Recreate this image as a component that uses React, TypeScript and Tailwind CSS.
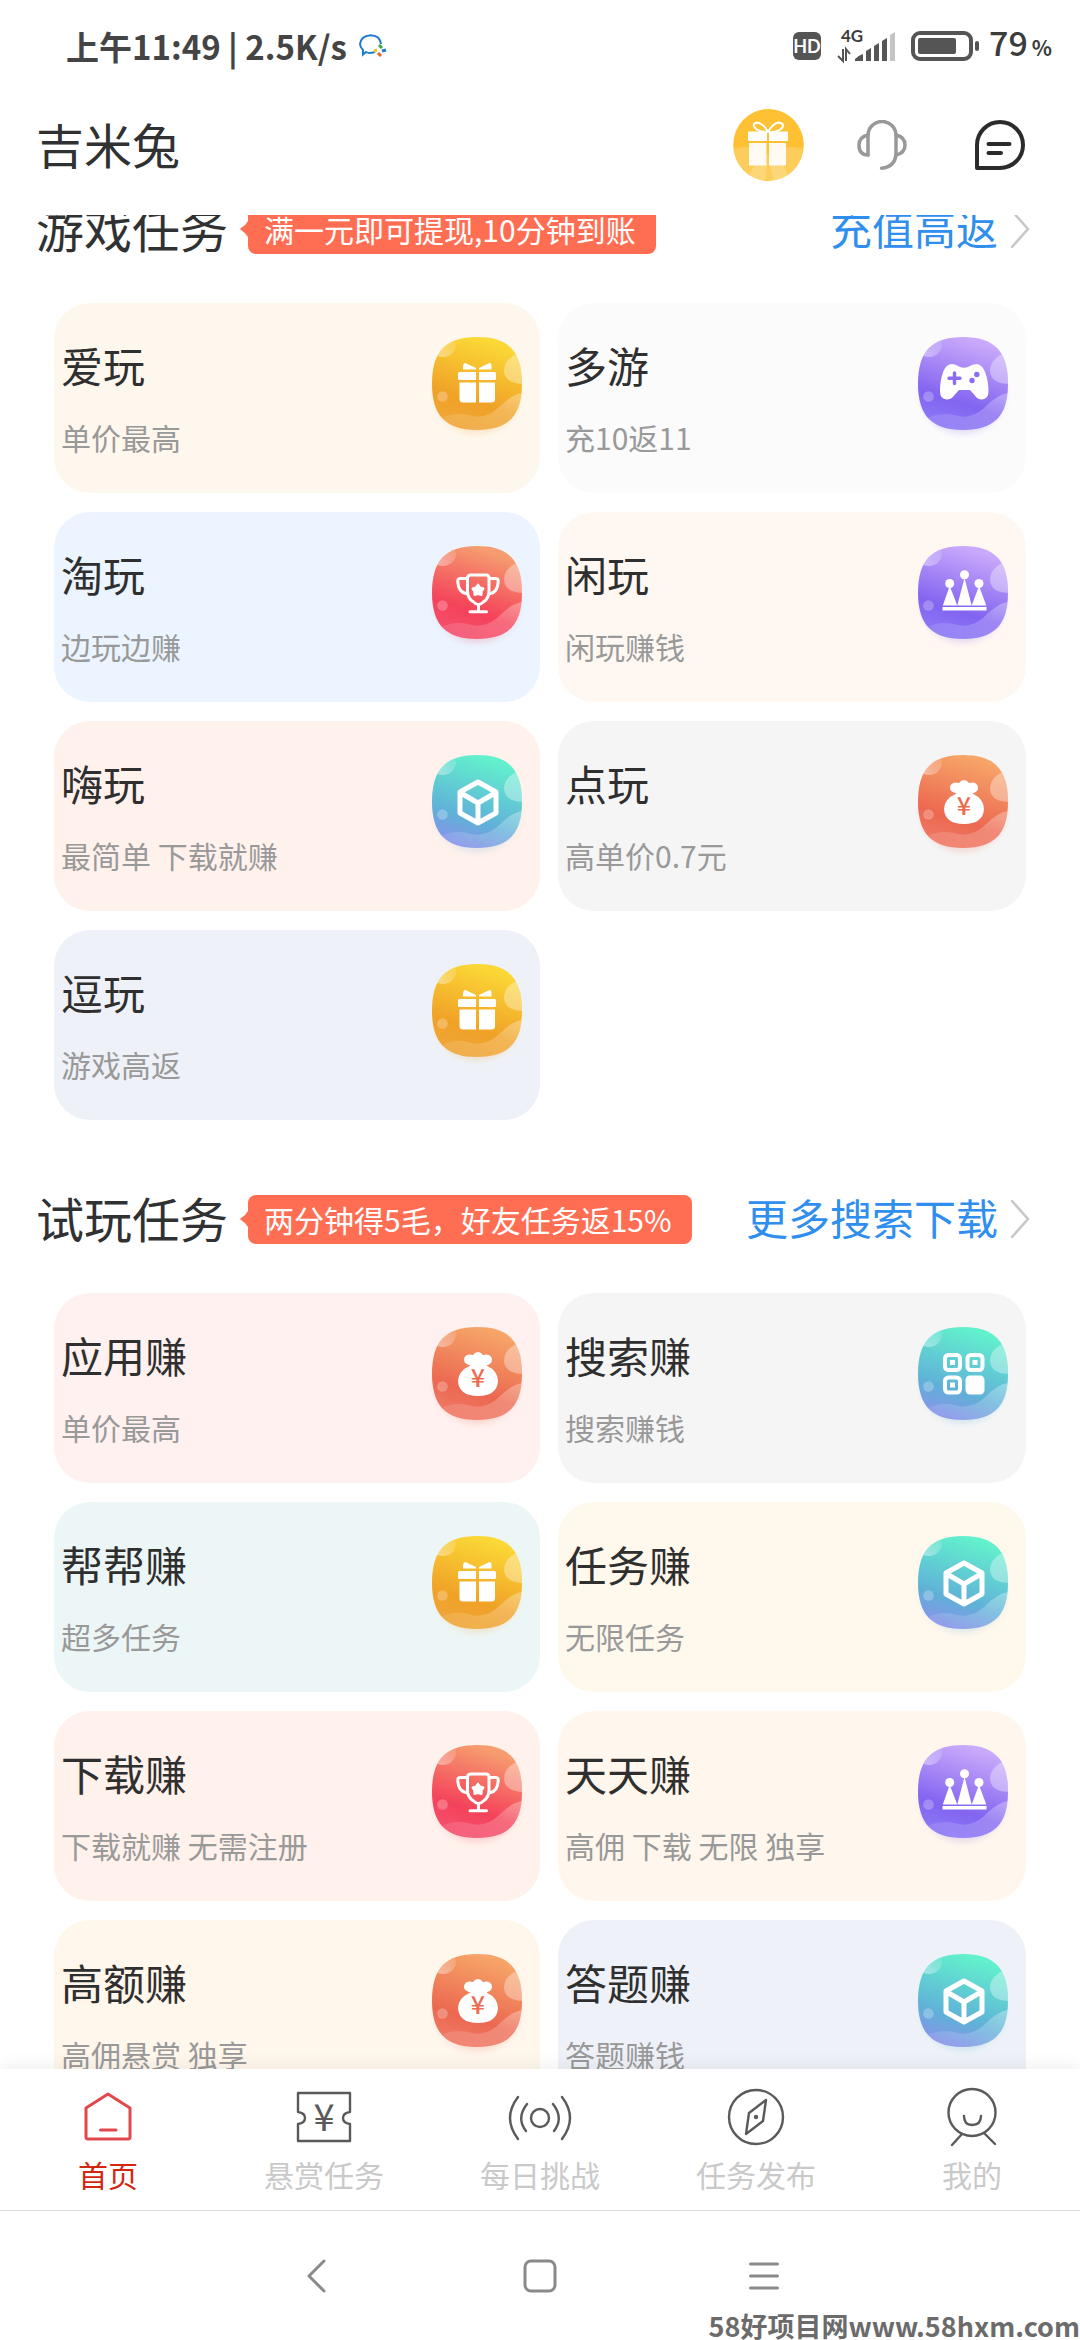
import React, { useId } from 'react';

type Glyph = 'gift' | 'gamepad' | 'trophy' | 'crown' | 'cube' | 'bag' | 'grid';

interface Task {
  title: string;
  desc: string;
  bg: string;
  glyph: Glyph;
}

const gameTasks: Task[] = [
  { title: '爱玩', desc: '单价最高', bg: 'bg-[#fef7ed]', glyph: 'gift' },
  { title: '多游', desc: '充10返11', bg: 'bg-[#fbfbfc]', glyph: 'gamepad' },
  { title: '淘玩', desc: '边玩边赚', bg: 'bg-[#ebf4ff]', glyph: 'trophy' },
  { title: '闲玩', desc: '闲玩赚钱', bg: 'bg-[#fff8f2]', glyph: 'crown' },
  { title: '嗨玩', desc: '最简单 下载就赚', bg: 'bg-[#fff1ec]', glyph: 'cube' },
  { title: '点玩', desc: '高单价0.7元', bg: 'bg-[#f5f5f5]', glyph: 'bag' },
  { title: '逗玩', desc: '游戏高返', bg: 'bg-[#eef2f8]', glyph: 'gift' },
];

const trialTasks: Task[] = [
  { title: '应用赚', desc: '单价最高', bg: 'bg-[#fff1ef]', glyph: 'bag' },
  { title: '搜索赚', desc: '搜索赚钱', bg: 'bg-[#f5f5f5]', glyph: 'grid' },
  { title: '帮帮赚', desc: '超多任务', bg: 'bg-[#edf6f6]', glyph: 'gift' },
  { title: '任务赚', desc: '无限任务', bg: 'bg-[#fff8ed]', glyph: 'cube' },
  { title: '下载赚', desc: '下载就赚 无需注册', bg: 'bg-[#fff1ec]', glyph: 'trophy' },
  { title: '天天赚', desc: '高佣 下载 无限 独享', bg: 'bg-[#fff7ed]', glyph: 'crown' },
  { title: '高额赚', desc: '高佣悬赏 独享', bg: 'bg-[#fff6ec]', glyph: 'bag' },
  { title: '答题赚', desc: '答题赚钱', bg: 'bg-[#eef2f8]', glyph: 'cube' },
];

const palette: Record<Glyph, string[]> = {
  gift: ['#fbd836', '#f0a127', '#efa63a'],
  gamepad: ['#c9a9fb', '#8264f0', '#8d79f6'],
  crown: ['#c9a9fb', '#8264f0', '#8d79f6'],
  trophy: ['#f69d6f', '#f4425a', '#f5516f'],
  cube: ['#62f0cd', '#60b0d8', '#8a92ea'],
  grid: ['#62f0cd', '#60b0d8', '#8a92ea'],
  bag: ['#f6a468', '#ec6850', '#f07a68'],
};

const glyphs: Record<Glyph, React.ReactNode> = {
  gift: (
    <g fill="#fff">
      <path d="M33.500 26 L44 31 V32.500 H31 V29 Q31.500 26 33.500 26Z" />
      <path d="M57.500 26 L47 31 V32.500 H59.500 V29 Q59.500 26 57.500 26Z" />
      <path d="M27.500 35 H44 V43 H27.500 Q26 43 26 41.500 V36.500 Q26 35 27.500 35Z" />
      <path d="M47 35 H62.500 Q64 35 64 36.500 V41.500 Q64 43 62.500 43 H47Z" />
      <path d="M27.500 45.500 H44 V65.500 H31 Q27.500 65.500 27.500 62Z" />
      <path d="M47 45.500 H63 V62 Q63 65.500 59.500 65.500 H47Z" />
    </g>
  ),
  gamepad: (
    <>
      <path
        fill="#fff"
        d="M34 27 Q38 27 41 29.500 Q46 32 51 29.500 Q54 27 59 27 Q64 27.500 67 35 Q70.500 44 70.500 54 Q70.500 62 64 62.500 Q59.500 62.500 56.500 58 L52 53 H41 L36.500 58 Q33.500 62.500 28.500 62.500 Q22 62 22 54 Q22 43 25.500 34 Q28.500 27 34 27Z"
      />
      <path d="M36.500 36 V46.500 M31 41.300 H42" stroke="#8b6cf2" strokeWidth="3.400" strokeLinecap="round" />
      <circle cx="58.800" cy="37.500" r="2.700" fill="#8b6cf2" />
      <circle cx="54" cy="43.500" r="2.700" fill="#8b6cf2" />
    </>
  ),
  trophy: (
    <>
      <g fill="none" stroke="#fff" strokeWidth="3" strokeLinecap="round" strokeLinejoin="round">
        <path d="M39 29 H54 Q57 29 57 32 V45 Q57 52 52 55.500 Q49 58.500 46.500 58.500 Q44 58.500 41 55.500 Q35.500 52 35.500 45 V32 Q35.500 29 39 29Z" />
        <path d="M35 32.500 H28 Q25.500 32.500 25.800 36 Q26.500 46 34 47.500" />
        <path d="M57.500 32.500 H64 Q66.500 32.500 66.200 36 Q65.500 46 58.500 47.500" />
        <path d="M46.500 59 V65 M38 65.800 H54.500" />
      </g>
      <path d="M46 38.500 L48.200 41.500 L51.500 42.500 L49.700 45.600 L49.500 49 L46 48 L42.500 49 L42.300 45.600 L40.500 42.500 L43.800 41.500Z" fill="#fff" stroke="#fff" strokeWidth="2" strokeLinejoin="round" />
    </>
  ),
  crown: (
    <g fill="#fff">
      <circle cx="31.700" cy="37.500" r="4.500" />
      <circle cx="46.500" cy="28.700" r="4.500" />
      <circle cx="61" cy="37.500" r="4.500" />
      <path d="M31.700 40 L39.300 59.500 H24.800Z M46.500 32 L53.700 59.500 H39.300Z M61 40 L68.300 59.500 H53.700Z" />
      <rect x="24.500" y="61" width="44" height="3.500" />
    </g>
  ),
  cube: (
    <path
      d="M46 27 L64 37 V58 L46 68 L28 58 V37Z M28 37.500 L46 48 L64 37.500 M46 48 V67"
      fill="none"
      stroke="#fff"
      strokeWidth="5"
      strokeLinejoin="round"
    />
  ),
  bag: (
    <>
      <path
        fill="#fff"
        d="M38.500 38.500 Q32 37 32 32.500 Q32.500 27.500 38.500 27.500 Q40 28 41 28 Q43 25 46 25 Q49 25 51 28 Q52 28 53.500 27.500 Q59.500 27.500 60 32.500 Q60 37 54.500 38.500 Q66 44 66 54 Q65 69 46 69 Q27 69 26 54 Q26 44 38.500 38.500Z"
      />
      <text x="46" y="60" textAnchor="middle" fontSize="25" fill="#ed6b4f" className="font-['Noto_Sans_CJK_SC',sans-serif] font-medium">¥</text>
    </>
  ),
  grid: (
    <>
      <g fill="none" stroke="#fff" strokeWidth="4">
        <rect x="27" y="28" width="15" height="15" rx="3.500" />
        <rect x="49.500" y="28" width="15" height="15" rx="3.500" />
        <rect x="27" y="50.500" width="15" height="15" rx="3.500" />
      </g>
      <g fill="#fff">
        <rect x="32" y="33" width="5" height="5" />
        <rect x="54.500" y="33" width="5" height="5" />
        <rect x="32" y="55.500" width="5" height="5" />
        <rect x="47.500" y="48.500" width="19" height="19" rx="4.500" />
      </g>
    </>
  ),
};

const TaskIcon = ({ glyph }: { glyph: Glyph }) => {
  const id = useId();
  const [top, mid, low] = palette[glyph];

  return (
    <svg viewBox="0 0 90 93" className="w-[90px] h-[93px] shrink-0 overflow-visible" aria-hidden="true">
      <defs>
        <linearGradient id={`${id}g`} x1="0.650" y1="0" x2="0.350" y2="1">
          <stop offset="0.050" stopColor={top} />
          <stop offset="0.700" stopColor={mid} />
          <stop offset="1" stopColor={low} />
        </linearGradient>
        <linearGradient id={`${id}w`} x1="1" y1="0" x2="0" y2="1">
          <stop offset="0" stopColor="#fff" stopOpacity="0.320" />
          <stop offset="1" stopColor="#fff" stopOpacity="0.050" />
        </linearGradient>
        <linearGradient id={`${id}b`} x1="0" y1="1" x2="1" y2="0">
          <stop offset="0" stopColor="#fff" stopOpacity="0.500" />
          <stop offset="1" stopColor="#fff" stopOpacity="0" />
        </linearGradient>
        <clipPath id={`${id}c`}>
          <path d="M45 0 C76 0 90 14 90 46.500 C90 79 76 93 45 93 C14 93 0 79 0 46.500 C0 14 14 0 45 0Z" />
        </clipPath>
        <filter id={`${id}s`} x="-0.200" y="-0.200" width="1.400" height="1.400">
          <feGaussianBlur stdDeviation="3" />
        </filter>
      </defs>
      <ellipse cx="45" cy="58" rx="42" ry="39" fill={mid} opacity="0.200" filter={`url(#${id}s)`} />
      <g clipPath={`url(#${id}c)`}>
        <rect width="90" height="93" fill={`url(#${id}g)`} />
        <circle cx="11" cy="7" r="13" fill={`url(#${id}b)`} />
        <path d="M92 14 Q72 20 72 34 Q73 47 92 47Z" fill="#fff" opacity="0.350" />
        <circle cx="10.500" cy="59.500" r="5.300" fill="#fff" opacity="0.250" />
        <path d="M8 82 Q22 74 40 79 Q54 82 66 71 Q80 57 90 56 V93 H8Z" fill={`url(#${id}w)`} />
      </g>
      {glyphs[glyph]}
    </svg>
  );
};

const TaskCard = ({ task }: { task: Task }) => (
  <a href="#" className={`flex items-start justify-between rounded-[36px] pl-[7px] pr-[18px] h-[190px] ${task.bg}`}>
    <div className="pt-[34px]">
      <h3 className="text-[42px] leading-[56px] text-[#2f2f2f]">{task.title}</h3>
      <p className="mt-[22px] text-[30px] leading-[44px] text-[#999]">{task.desc}</p>
    </div>
    <div className="pt-[34px]">
      <TaskIcon glyph={task.glyph} />
    </div>
  </a>
);

const TaskSection = ({ title, tip, link, tasks }: { title: string; tip: string; link: string; tasks: Task[] }) => (
  <section>
    <div className="flex items-center h-[72px] pl-9 pr-[50px]">
      <h2 className="pb-1 text-[48px] leading-[68px] text-[#2f3132]">{title}</h2>
      <div className="flex items-center ml-3">
        <svg viewBox="0 0 8 16" className="w-2 h-4" aria-hidden="true">
          <path d="M8 0 V16 Q6 12 1 9 Q-0.500 8 1 7 Q6 4 8 0Z" fill="#ff6e53" />
        </svg>
        <span className="h-[49px] pl-4 pr-5 rounded-lg bg-[#ff6e53] text-[30px] leading-[48px] text-white whitespace-nowrap">{tip}</span>
      </div>
      <a href="#" className="ml-auto flex items-center gap-3 text-[42px] leading-[60px] text-[#2f8eee] whitespace-nowrap">
        <span className="pb-1 leading-[56px]">{link}</span>
        <svg viewBox="0 0 20 40" className="w-5 h-10" fill="none" stroke="#c8c8c8" strokeWidth="2.500" strokeLinecap="round" aria-hidden="true">
          <path d="M2 2 L18 20 L2 38" />
        </svg>
      </a>
    </div>
    <div className="grid grid-cols-[486fr_468fr] gap-x-[18px] gap-y-[19px] mt-[38px] pl-[54px] pr-[54px]">
      {tasks.map((task) => (
        <TaskCard key={task.title} task={task} />
      ))}
    </div>
  </section>
);

const StatusBar = () => (
  <div className="flex items-center justify-between h-[92px] pl-[66px] pr-7 text-[#3c3c3c]">
    <div className="flex items-center gap-3">
      <span className="text-[33px] leading-[48px] font-bold whitespace-nowrap text-[#444]">上午11:49 | 2.5K/s</span>
      <svg viewBox="0 0 28 24" className="w-7 h-6" fill="none" aria-hidden="true">
        <path d="M16 18 Q10 20 7 18 L4 20.500 V16 Q1 13 1 10 Q2 2 11.500 1.200 Q21 1.500 22 10" stroke="#1e7ccf" strokeWidth="2" />
        <path d="M20 11 L23 14" stroke="#3fa64b" strokeWidth="3" />
        <path d="M23 17 L27 16" stroke="#1e7ccf" strokeWidth="3" />
        <path d="M19 19 L22 22" stroke="#e5633b" strokeWidth="3" />
        <path d="M15 17 L18 16" stroke="#f3c52d" strokeWidth="3" />
      </svg>
    </div>
    <div className="flex items-center">
      <span className="w-7 h-7 rounded-md bg-[#555] text-white text-[18px] leading-7 text-center font-bold font-['Lato',sans-serif]">HD</span>
      <svg viewBox="0 0 58 32" className="w-[58px] h-8 ml-4 overflow-visible" aria-hidden="true">
        <text x="4" y="12" fontSize="17" fill="#3c3c3c" className="font-['Lato',sans-serif] font-bold">4G</text>
        <path d="M6 19 V31 L1 26 M9 31 V19 L13 24" fill="none" stroke="#555" strokeWidth="2" />
        <path d="M18 31 V29 Q22 25 26 24 V31Z M29 31 V21 L34 18 V31Z M37 31 V16 L42 13 V31Z M45 31 V11 L50 8 V31Z" fill="#555" />
        <path d="M53 31 V5 L58 2 V31Z" fill="#c4c4c4" />
      </svg>
      <svg viewBox="0 0 70 32" className="w-[70px] h-8 ml-4" aria-hidden="true">
        <rect x="2" y="3" width="58" height="26" rx="7" fill="none" stroke="#555" strokeWidth="4" />
        <rect x="7" y="8" width="38" height="16" rx="2" fill="#555" />
        <rect x="64" y="11" width="4" height="10" rx="2" fill="#555" />
      </svg>
      <span className="flex items-baseline gap-1 ml-2 leading-[44px] pb-1">
        <span className="text-[34px] font-medium">79</span>
        <span className="text-[21px] font-bold">%</span>
      </span>
    </div>
  </div>
);

const Header = () => (
  <header className="flex items-center justify-between h-[123px] pb-[18px] pl-9 pr-[55px]">
    <h1 className="pb-1 text-[48px] leading-[68px] text-[#2f3132]">吉米兔</h1>
    <div className="flex items-center">
      <button aria-label="礼物">
        <svg viewBox="0 0 71 72" className="w-[71px] h-[72px]">
          <ellipse cx="35.500" cy="36" rx="35.300" ry="36" fill="#fdc133" />
          <path d="M1 40 Q18 34 35 46 Q52 34 70 40 Q68 60 52 68 Q35 76 19 68 Q3 58 1 40Z" fill="#fff" opacity="0.200" />
          <path d="M22 56 L16 66 Q24 71 32 72 L34 56Z M37 56 L40 72 Q50 71 55 66 L50 56Z" fill="#fff" opacity="0.180" />
          <path d="M35 23 Q30 14 24 13.500 Q18 15 23 20 Q28 23.500 35 23 Q40 14 46 13.500 Q53 15 48 20 Q43 23.500 35 23Z" fill="none" stroke="#fff" strokeWidth="2" />
          <path d="M15 22.500 H34 V32 H15Z M36 22.500 H55 V32 H36Z" fill="#fff" />
          <path d="M16 34 H33.500 V56.500 H16Z M36 34 H53 V56.500 H36Z" fill="#fff" opacity="0.920" />
        </svg>
      </button>
      <button aria-label="客服" className="ml-[53px]">
        <svg viewBox="0 0 50 50" className="w-[50px] h-[50px]" fill="none" stroke="#999" strokeWidth="3.500" strokeLinecap="round" strokeLinejoin="round">
          <path d="M11 35 V15.500 A14 14 0 0 1 39 15.500 V34 Q38 47 24.500 48.200" />
          <path d="M11 15 Q2 17 2 25 Q2 35 11 35" />
          <path d="M39 15 Q48 17 48 25 Q48 33 39 35" />
        </svg>
      </button>
      <button aria-label="消息" className="ml-[68px]">
        <svg viewBox="0 0 50 50" className="w-[50px] h-[50px]" fill="none" stroke="#2b2b2b" strokeWidth="4" strokeLinecap="round" strokeLinejoin="round">
          <path d="M2 48 V25 A23 23 0 1 1 25 48Z" />
          <path d="M13.500 24 H34.500 M13.500 33 H26" />
        </svg>
      </button>
    </div>
  </header>
);

const tabs = [
  {
    label: '首页',
    active: true,
    icon: (
      <g stroke="#e0484c" strokeWidth="3">
        <path d="M10 20 L32 6 L54 20 V49 Q54 51 52 51 H12 Q10 51 10 49Z" />
        <path d="M24.500 42 H40" />
      </g>
    ),
  },
  {
    label: '悬赏任务',
    icon: (
      <>
        <path d="M6 5 H58 V24 Q51 25 51 30 Q51 35 58 36 V53 H6 V36 Q13 35 13 30 Q13 25 6 24Z" />
        <text x="32" y="43" textAnchor="middle" fontSize="38" fill="#5a5a5a" stroke="none" className="font-['Noto_Sans_CJK_SC',sans-serif]">¥</text>
      </>
    ),
  },
  {
    label: '每日挑战',
    icon: (
      <>
        <circle cx="32" cy="30" r="9" />
        <path d="M19 16 Q8 30 18 43 M10 9 Q-6 30 10 51 M45 16 Q56 30 46 43 M54 9 Q70 30 54 51" />
      </>
    ),
  },
  {
    label: '任务发布',
    icon: (
      <>
        <circle cx="32" cy="29" r="27" />
        <path d="M42 12 L25 25 L22 46 L39 33Z" />
        <circle cx="32" cy="29" r="1" />
      </>
    ),
  },
  {
    label: '我的',
    icon: (
      <>
        <circle cx="32" cy="24.500" r="23.500" />
        <path d="M24 28 Q24 37 32 37 Q41 37 41 28 M22 46 L12 57 M44 45 L55 56" />
      </>
    ),
  },
];

const TabBar = () => (
  <nav className="relative grid grid-cols-5 h-[142px] shrink-0 bg-white border-b border-[#dedede] shadow-[0_-4px_16px_rgba(0,0,0,0.06)]">
    {tabs.map((tab) => (
      <a key={tab.label} href="#" className="flex flex-col items-center pt-[19px]">
        <svg viewBox="0 0 64 60" className="w-16 h-[60px] overflow-visible" fill="none" stroke="#5a5a5a" strokeWidth="2.400" strokeLinecap="round" strokeLinejoin="round" aria-hidden="true">
          {tab.icon}
        </svg>
        <span className={`mt-1 text-[30px] leading-[44px] ${tab.active ? 'text-[#d4260f]' : 'text-[#c9c9c9]'}`}>{tab.label}</span>
      </a>
    ))}
  </nav>
);

const SystemNav = () => (
  <div className="relative flex items-center justify-center gap-[164px] h-[129px] shrink-0 bg-white">
    <button aria-label="返回" className="w-[60px] flex justify-center">
      <svg viewBox="0 0 20 34" className="w-5 h-[34px]" fill="none" stroke="#8a8a8a" strokeWidth="3" strokeLinecap="round" strokeLinejoin="round">
        <path d="M18 2 L3 17 L18 32" />
      </svg>
    </button>
    <button aria-label="主屏幕" className="w-[60px] flex justify-center">
      <svg viewBox="0 0 34 34" className="w-[34px] h-[34px]" fill="none" stroke="#8a8a8a" strokeWidth="3">
        <rect x="2" y="2" width="30" height="30" rx="6" />
      </svg>
    </button>
    <button aria-label="菜单" className="w-[60px] flex justify-center">
      <svg viewBox="0 0 30 30" className="w-[30px] h-[30px]" stroke="#8a8a8a" strokeWidth="3" strokeLinecap="round">
        <path d="M1.500 3 H28.500 M1.500 15 H28.500 M1.500 27 H28.500" />
      </svg>
    </button>
    <span className="absolute right-0 bottom-0 text-[27px] leading-[28px] font-bold text-[#6b6b6b] whitespace-nowrap">58好项目网www.58hxm.com</span>
  </div>
);

export default function App() {
  return (
    <div className="flex flex-col h-screen bg-white overflow-hidden font-['Noto_Sans_CJK_SC',sans-serif]">
      <StatusBar />
      <Header />
      <main className="flex-1 min-h-0 overflow-y-auto [scrollbar-width:none]">
        {/* the list is scrolled a little, so the first heading slides under the header */}
        <div className="-mt-[22px] flex flex-col gap-[63px]">
          <TaskSection title="游戏任务" tip="满一元即可提现,10分钟到账" link="充值高返" tasks={gameTasks} />
          <TaskSection title="试玩任务" tip="两分钟得5毛，好友任务返15%" link="更多搜索下载" tasks={trialTasks} />
        </div>
      </main>
      <TabBar />
      <SystemNav />
    </div>
  );
}
